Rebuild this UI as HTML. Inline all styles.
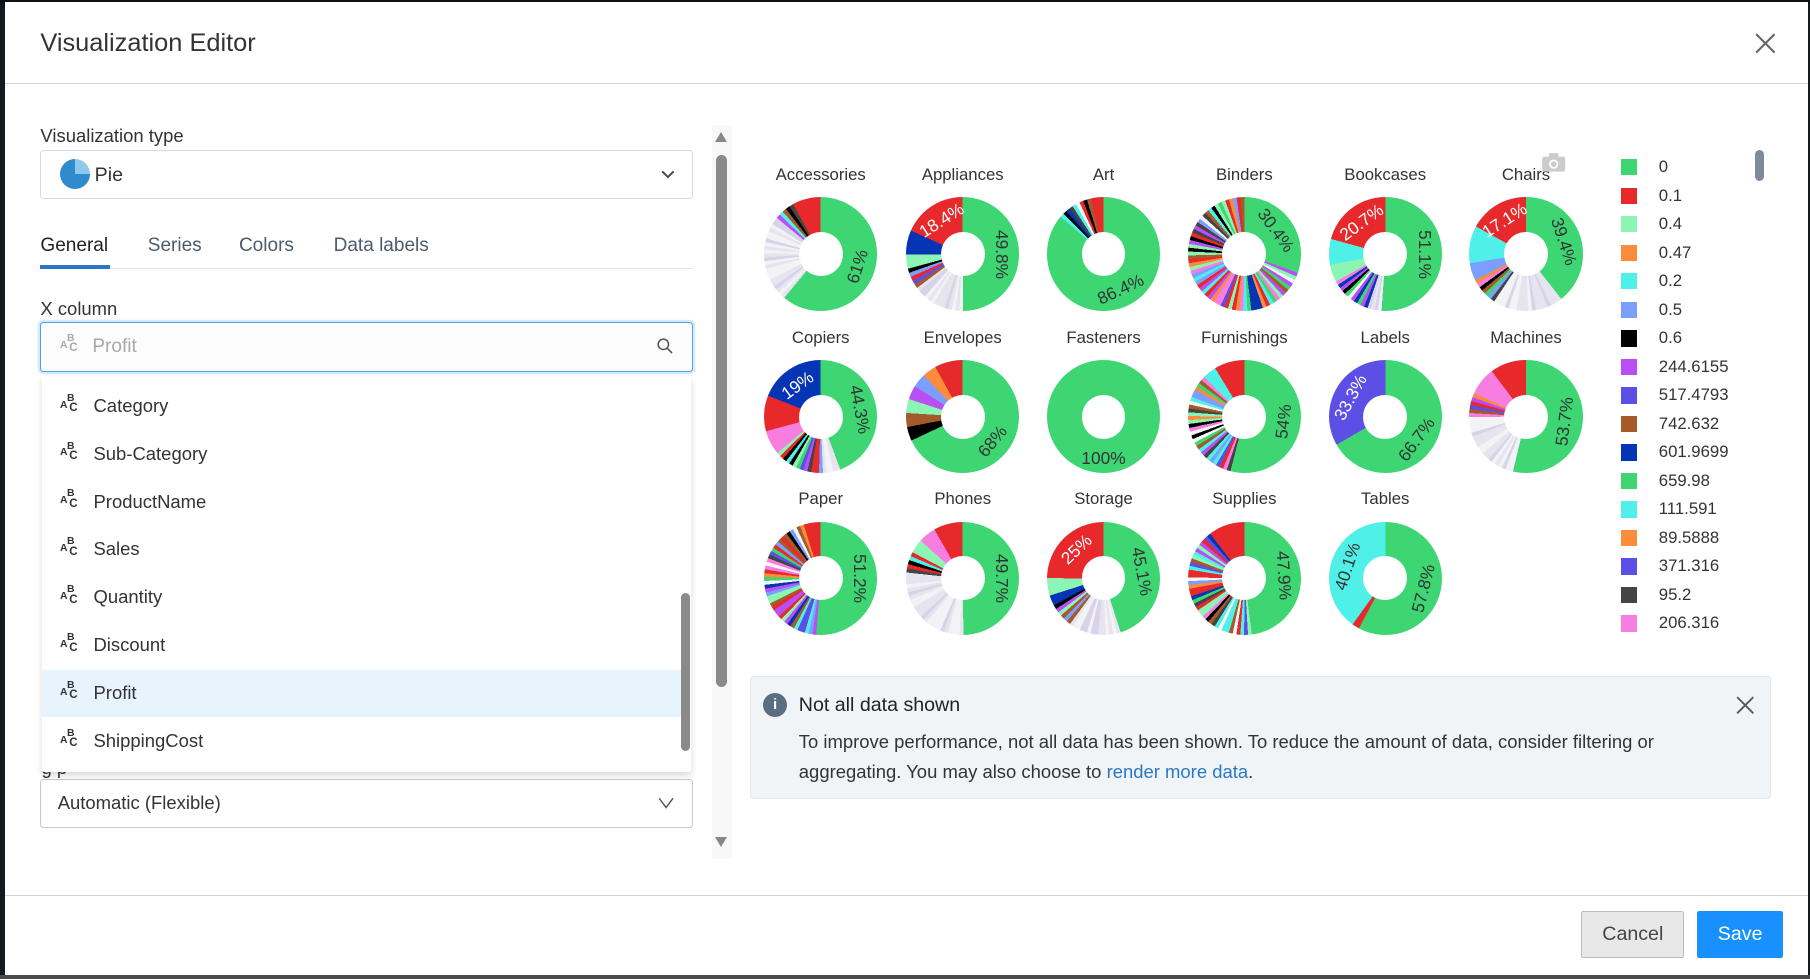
<!DOCTYPE html>
<html><head><meta charset="utf-8">
<style>
html,body{margin:0;padding:0;}
body{width:1810px;height:979px;overflow:hidden;background:#13191c;font-family:"Liberation Sans",sans-serif;}
#w{zoom:1.15434;position:relative;width:1568px;height:848px;}
.modal{position:absolute;left:4px;top:2px;width:1562px;height:843px;background:#fff;}
.abs{position:absolute;}
.t{color:#333;font-size:16px;}
.h1{left:35px;top:25px;font-size:22px;color:#333;}
.hr{left:0;width:1562px;height:1px;background:#d4d4d4;}
.box{border:1px solid #d5dbe3;border-radius:3px;background:#fff;box-sizing:border-box;}
.abc{font-size:10px;font-weight:bold;color:#333;line-height:8px;width:18px;}
.abc b{position:absolute;left:6px;top:-3px;font-size:9px}
.abc c{position:absolute;left:8px;top:6px;font-size:10px}
.abc a{position:absolute;left:0;top:3px;font-size:9px}
.item{position:absolute;left:0;width:555px;height:41px;}
.item span.n{position:absolute;left:45px;top:11px;font-size:16px;color:#333;}
.leg{position:absolute;left:1404px;font-size:14.5px;color:#333;}
.leg i{position:absolute;left:0;top:2px;width:14px;height:14px;}
.leg span{position:absolute;left:33px;top:0;}
.dt{position:absolute;font-size:14.5px;color:#333;text-align:center;width:120px;}
.dn{position:absolute;width:98px;height:98px;border-radius:50%;}
.dn::after{content:"";position:absolute;left:30px;top:30px;width:38px;height:38px;border-radius:50%;background:#fff;}
.lb{position:absolute;font-size:14px;color:#333;white-space:nowrap;transform-origin:center;z-index:2;}
</style></head><body>
<div style="position:absolute;left:0;top:0;width:1810px;height:4px;background:#0d1315"></div>
<div style="position:absolute;left:0;top:975px;width:1810px;height:4px;background:#4a4a4a"></div>
<div id="w">
<div class="modal"></div>
<div class="abs h1">Visualization Editor</div>
<svg class="abs" style="left:1520px;top:29px" width="18" height="18" viewBox="0 0 18 18"><path d="M1 1L17 17M17 1L1 17" stroke="#666" stroke-width="1.8"/></svg>
<div class="abs hr" style="left:4px;top:72px"></div>

<div class="abs t" style="left:35px;top:108px">Visualization type</div>
<div class="abs box" style="left:35px;top:130px;width:565px;height:42px"></div>
<div class="abs" style="left:52px;top:138px;width:26px;height:26px;border-radius:50%;background:conic-gradient(#8fc8e8 0 25%,#2f8bcc 25% 100%)"></div>
<div class="abs t" style="left:82px;top:142px;font-size:17px">Pie</div>
<svg class="abs" style="left:573px;top:146px" width="12" height="10" viewBox="0 0 12 10"><path d="M1 2L6 7L11 2" stroke="#444" fill="none" stroke-width="1.6"/></svg>

<div class="abs t" style="left:35px;top:204px;font-size:16.5px;color:#222">General</div>
<div class="abs t" style="left:128px;top:204px;font-size:16.5px;color:#4c5c6c">Series</div>
<div class="abs t" style="left:207px;top:204px;font-size:16.5px;color:#4c5c6c">Colors</div>
<div class="abs t" style="left:289px;top:204px;font-size:16.5px;color:#4c5c6c">Data labels</div>
<div class="abs" style="left:35px;top:232px;width:565px;height:1px;background:#e2e8ee"></div>
<div class="abs" style="left:35px;top:230px;width:60px;height:3px;background:#2a77c6"></div>

<div class="abs t" style="left:35px;top:258px">X column</div>
<div class="abs" style="left:35px;top:279px;width:565px;height:43px;border:1px solid #4aa3ef;border-radius:3px;box-sizing:border-box;box-shadow:0 0 0 2px #d6eafc;background:#fcfcfc"></div>
<div class="abs abc" style="left:52px;top:292px;color:#aaa"><a>A</a><b>B</b><c>C</c></div>
<div class="abs t" style="left:80px;top:291px;color:#aaa;font-size:16.5px">Profit</div>
<svg class="abs" style="left:569px;top:293px" width="14" height="14" viewBox="0 0 14 14"><circle cx="5.5" cy="5.5" r="4.5" stroke="#555" fill="none" stroke-width="1.3"/><path d="M9 9L13 13" stroke="#555" stroke-width="1.4"/></svg>

<div class="abs" style="left:36px;top:326px;width:563px;height:343px;background:#fff;box-shadow:0 3px 6px rgba(0,0,0,.15);border-radius:2px;z-index:3">
<div id="items"></div>
<div class="abs" style="left:554px;top:188px;width:8px;height:137px;background:#8a8a8a;border-radius:4px"></div>
</div>
<div class="abs" style="left:36px;top:656px;font-size:16px;color:#333">g p</div>
<div class="abs box" style="left:35px;top:675px;width:565px;height:42px;border-color:#c9c9c9"></div>
<div class="abs t" style="left:50px;top:686px">Automatic (Flexible)</div>
<svg class="abs" style="left:570px;top:690px" width="14" height="12" viewBox="0 0 14 12"><path d="M1 2L7 10L13 2" stroke="#555" fill="none" stroke-width="1.3"/></svg>

<div class="abs" style="left:617px;top:108px;width:17px;height:636px;background:#f8f8f8"></div>
<div class="abs" style="left:619px;top:114px;width:0;height:0;border-left:6px solid transparent;border-right:6px solid transparent;border-bottom:9px solid #888"></div>
<div class="abs" style="left:620px;top:134px;width:10px;height:461px;background:#8a8a8a;border-radius:5px"></div>
<div class="abs" style="left:619px;top:725px;width:0;height:0;border-left:6px solid transparent;border-right:6px solid transparent;border-top:9px solid #888"></div>

<div id="charts"></div>
<svg class="abs" style="left:1335px;top:132px" width="22" height="18" viewBox="0 0 22 18"><rect x="1" y="4" width="20" height="13" rx="2" fill="#ccc"/><rect x="7" y="1" width="8" height="4" fill="#ccc"/><circle cx="11" cy="10.5" r="4" fill="#fff"/><circle cx="11" cy="10.5" r="2.5" fill="#ccc"/></svg>
<div id="legend"></div>
<div class="abs" style="left:1520px;top:130px;width:8px;height:27px;background:#7d8a9c;border-radius:4px"></div>

<div class="abs" style="left:650px;top:586px;width:884px;height:106px;background:#f0f4f7;border:1px solid #e1e8ee;border-radius:3px;box-sizing:border-box"></div>
<div class="abs" style="left:661px;top:600px;width:21px;height:21px;border-radius:50%;background:#5a6e82;color:#fff;font-size:13px;font-weight:bold;text-align:center;line-height:21px">i</div>
<div class="abs" style="left:692px;top:601px;font-size:17px;color:#222">Not all data shown</div>
<svg class="abs" style="left:1504px;top:603px" width="16" height="16" viewBox="0 0 16 16"><path d="M1 1L15 15M15 1L1 15" stroke="#555" stroke-width="1.6"/></svg>
<div class="abs" style="left:692px;top:630px;font-size:16px;color:#333;line-height:26px;width:820px">To improve performance, not all data has been shown. To reduce the amount of data, consider filtering or aggregating. You may also choose to <span style="color:#2a77c6">render more data</span>.</div>

<div class="abs hr" style="left:4px;top:775px"></div>
<div class="abs" style="left:1370px;top:789px;width:89px;height:41px;background:#e8e8e8;border:1px solid #bbb;border-radius:2px;box-sizing:border-box;text-align:center;line-height:39px;font-size:17px;color:#444">Cancel</div>
<div class="abs" style="left:1470px;top:789px;width:75px;height:41px;background:#1890ff;border-radius:2px;text-align:center;line-height:41px;font-size:17px;color:#fff">Save</div>
</div>
<script>
var items=["Category","Sub-Category","ProductName","Sales","Quantity","Discount","Profit","ShippingCost"];
var h="";items.forEach(function(n,i){h+='<div class="item" style="top:'+(5+i*41.5)+'px;'+(n=="Profit"?'background:#e8f4fd;':'')+'"><div class="abs abc" style="left:16px;top:13px"><a>A</a><b>B</b><c>C</c></div><span class="n">'+n+'</span></div>';});
document.getElementById("items").innerHTML=h;
var G="#3dd672",R="#e8292b",M="#8df5b4",O="#fb8c3c",C="#4ff0e8",LB="#7b9eff",K="#000",P="#b84ff5",V="#5c4fe6",BR="#a55a2a",DB="#0535b5",DG="#444",PK="#f77ee0";
var pal=[R,M,O,C,LB,K,P,V,BR,DB,DG,PK,G,"#f5f5f5"];
var seed=7;function rnd(){seed=(seed*9301+49297)%233280;return seed/233280;}
function stripes(f,light){var a=[];var n=Math.max(1,Math.round(f*90));for(var i=0;i<n;i++){var c=pal[Math.floor(rnd()*pal.length)];if(light){var q=rnd();c=q<.8?(q<.4?"#f3f2f7":"#e6e4ee"):"#d9d3ea";}a.push([c,f/n]);}return a;}
function mixed(f){return stripes(f,false);}
function REST(f){return stripes(f,true);}
var D=[
["Accessories",[[G,.61]].concat(REST(.25),mixed(.06),[[R,.08]]),[["61%",.3]]],
["Appliances",[[G,.498]].concat(REST(.15),mixed(.06),[[M,.04],[DB,.07],[R,.182]]),[["49.8%",.25],["18.4%",.91,"#fff"]]],
["Art",[[G,.864]].concat(mixed(.1),[[R,.036]]),[["86.4%",.43]]],
["Binders",[[G,.304]].concat(stripes(.696,false)),[["30.4%",.15]]],
["Bookcases",[[G,.511]].concat(REST(.04),mixed(.118),[[M,.05],[C,.074],[R,.207]]),[["51.1%",.25],["20.7%",.9,"#fff"]]],
["Chairs",[[G,.394]].concat(REST(.2),mixed(.08),[[LB,.05],[C,.106],[R,.17]]),[["39.4%",.2],["17.1%",.91,"#fff"]]],
["Copiers",[[G,.443]].concat(REST(.05),mixed(.145),[[PK,.07],[R,.102],[DB,.19]]),[["44.3%",.22],["19%",.9,"#fff"]]],
["Envelopes",[[G,.68],[K,.04],[BR,.04],[M,.04],[P,.04],[LB,.04],[O,.04],[R,.08]],[["68%",.36]]],
["Fasteners",[[G,1]],[["100%",.5]]],
["Furnishings",[[G,.54]].concat(stripes(.333,false),[[C,.04],[R,.087]]),[["54%",.27]]],
["Labels",[[G,.667],[V,.333]],[["66.7%",.35],["33.3%",.83,"#fff"]]],
["Machines",[[G,.537]].concat(REST(.2),mixed(.08),[[PK,.08],[R,.103]]),[["53.7%",.27]]],
["Paper",[[G,.512]].concat(stripes(.44,false),[[R,.048]]),[["51.2%",.25]]],
["Phones",[[G,.497]].concat(REST(.27),mixed(.06),[[M,.04],[PK,.05],[R,.083]]),[["49.7%",.25]]],
["Storage",[[G,.451]].concat(REST(.15),mixed(.07),[[DB,.03],[M,.05],[R,.249]]),[["45.1%",.22],["25%",.88,"#fff"]]],
["Supplies",[[G,.479]].concat(stripes(.417,false),[[R,.104]]),[["47.9%",.24]]],
["Tables",[[G,.578],[R,.021],[C,.401]],[["57.8%",.29],["40.1%",.8]]]
];
var out="",cx=[711,834,956,1078,1200,1322],cy=[220,361,501];
D.forEach(function(d,i){var x=cx[i%6],y=cy[Math.floor(i/6)];var s=0,g=[];d[1].forEach(function(p){g.push(p[0]+" "+(s*100).toFixed(2)+"% "+((s+p[1])*100).toFixed(2)+"%");s+=p[1];});
out+='<div class="dt" style="left:'+(x-60)+'px;top:'+(y-77)+'px">'+d[0]+'</div>';
out+='<div class="dn" style="left:'+(x-49)+'px;top:'+(y-49)+'px;background:conic-gradient('+g.join(",")+')"></div>';
d[2].forEach(function(l){var ang=l[1]*360;var a=ang*Math.PI/180;var r=d[0]=="Fasteners"?36:34;var lx=x+r*Math.sin(a),ly=y-r*Math.cos(a);
var deg=ang<=90?ang:(ang<270?ang-180:ang-360);if(d[0]=="Fasteners")deg=0;
var fs=l[2]?15:15;
out+='<div class="lb" style="left:'+(lx-24)+'px;top:'+(ly-9)+'px;width:48px;text-align:center;font-size:'+fs+'px;color:'+(l[2]||"#333")+';transform:rotate('+deg+'deg)">'+l[0]+'</div>';});
});
document.getElementById("charts").innerHTML=out;
var L=[[G,"0"],[R,"0.1"],[M,"0.4"],[O,"0.47"],[C,"0.2"],[LB,"0.5"],[K,"0.6"],[P,"244.6155"],[V,"517.4793"],[BR,"742.632"],[DB,"601.9699"],[G,"659.98"],[C,"111.591"],[O,"89.5888"],[V,"371.316"],[DG,"95.2"],[PK,"206.316"]];
var lh="";L.forEach(function(l,i){lh+='<div class="leg" style="top:'+(136+i*24.7)+'px"><i style="background:'+l[0]+'"></i><span>'+l[1]+'</span></div>';});
document.getElementById("legend").innerHTML=lh;
</script>
</body></html>
